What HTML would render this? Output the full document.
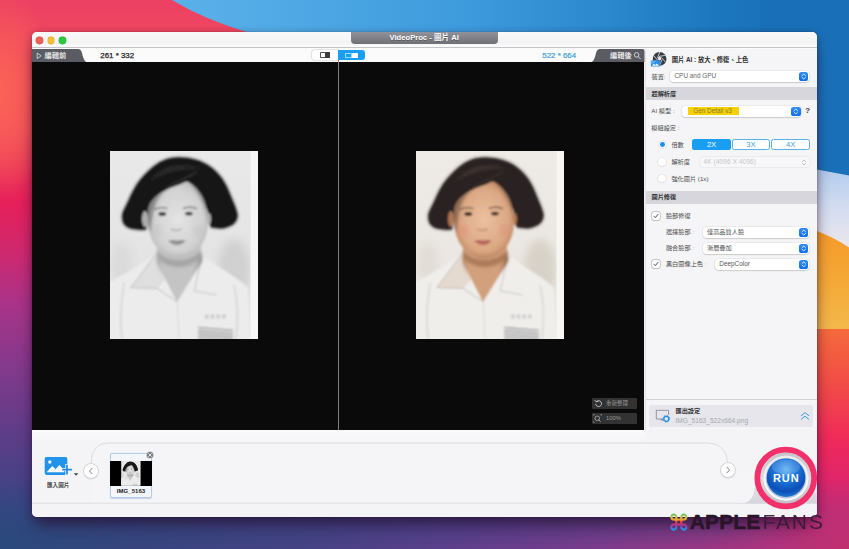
<!DOCTYPE html>
<html lang="zh-Hant">
<head>
<meta charset="utf-8">
<title>VideoProc - 圖片 AI</title>
<style>
html,body{margin:0;padding:0;}
body{width:849px;height:549px;overflow:hidden;position:relative;background:#3a3f80;font-family:"Liberation Sans","Noto Sans CJK TC",sans-serif;}
.a{position:absolute;}
.t{position:absolute;white-space:nowrap;line-height:1;}
#bg{position:absolute;left:0;top:0;}
#win{left:32px;top:32px;width:784.5px;height:484.800px;border-radius:5px;background:#f1f1f3;box-shadow:0 11px 16px -3px rgba(35,10,40,.62),0 1px 7px rgba(30,0,30,.3),0 0 1px rgba(0,0,0,.4);overflow:hidden;}
/* coordinates inside #win are relative to (32,32) */
#tbar{left:0;top:0;width:785px;height:14.600px;background:linear-gradient(#f9f9f9,#f3f3f4 70%,#fdfdfd);border-bottom:1px solid #c3c3c8;}
.tl{width:6.800px;height:6.800px;border-radius:50%;top:4.900px;}
#pill{left:319px;top:0;width:147px;height:12px;border-radius:0 0 4px 4px;background:linear-gradient(#92929a,#6f6f78);}
#tabrow{left:0;top:15.600px;width:785px;height:14.400px;background:#fbfbfb;}
#black{left:0;top:30px;width:612px;height:367.500px;background:#0a0a0a;}
#divider{left:305.500px;top:28px;width:1.600px;height:369.500px;background:#808080;}
#panel{left:613px;top:16.500px;width:172px;height:381px;background:#f5f5f7;border-left:1px solid #e4e4e8;}
.band{left:613.500px;width:171.500px;height:12.800px;background:#d6d6dc;}
.lbl{font-size:6.200px;color:#4a4a4a;}
.lblb{font-size:6.200px;color:#333;font-weight:bold;}
.sel{background:#fff;border-radius:3px;box-shadow:0 0.500px 1.200px rgba(0,0,0,.28),0 0 0 .3px rgba(0,0,0,.08);}
.sel .v{position:absolute;left:4.500px;top:50%;transform:translateY(-50%);font-size:6.400px;color:#666;white-space:nowrap;line-height:1;}
.stp{position:absolute;right:.8px;top:1px;bottom:1px;width:9.500px;border-radius:2.600px;background:linear-gradient(#2f8cf6,#0f6cf0);}
.stp svg{position:absolute;left:0;top:0;width:100%;height:100%;}
.radio{width:7.600px;height:7.600px;border-radius:50%;background:#fff;box-shadow:0 0 0 .6px #dadade,0 .5px .8px rgba(0,0,0,.1);}
.chk{width:8px;height:8px;border-radius:2px;background:#fff;box-shadow:0 0 0 .7px #b9b9bd,0 .5px 1px rgba(0,0,0,.12);}
.xbtn{height:11px;border-radius:2.500px;font-size:7.600px;text-align:center;line-height:11px;box-sizing:border-box;}
.ph{position:absolute;display:block;}
.pht{position:absolute;display:block;}
.cbtn{width:14px;height:14px;border-radius:50%;background:#fff;box-shadow:0 0 0 .8px #d0d0d4,0 1px 2px rgba(0,0,0,.18);}
.dk{background:#323232;border-radius:1px;height:10.800px;width:45.500px;left:559.500px;}
</style>
</head>
<body>
<svg id="bg" width="849" height="549" viewBox="0 0 849 549">
<defs>
<linearGradient id="gl" x1="0" y1="0" x2="0" y2="1">
<stop offset="0" stop-color="#ed4063"/><stop offset=".11" stop-color="#f04c5e"/><stop offset=".24" stop-color="#f04a58"/>
<stop offset=".37" stop-color="#e6205a"/><stop offset=".47" stop-color="#cc2a72"/><stop offset=".55" stop-color="#aa3388"/>
<stop offset=".66" stop-color="#86398c"/><stop offset=".79" stop-color="#5e3d88"/><stop offset=".91" stop-color="#3f4485"/><stop offset="1" stop-color="#2b4a82"/>
</linearGradient>
<radialGradient id="glow" cx=".5" cy=".5" r=".5"><stop offset="0" stop-color="#fc6456"/><stop offset=".5" stop-color="#f85c58" stop-opacity=".7"/><stop offset="1" stop-color="#f55a58" stop-opacity="0"/></radialGradient>
<linearGradient id="gr" x1="0" y1="329" x2="0" y2="549" gradientUnits="userSpaceOnUse">
<stop offset="0" stop-color="#f56a3c"/><stop offset=".25" stop-color="#f24c46"/><stop offset=".5" stop-color="#f02a5a"/>
<stop offset=".68" stop-color="#e0266a"/><stop offset=".82" stop-color="#c42c78"/><stop offset="1" stop-color="#b23482"/>
</linearGradient>
<linearGradient id="gor" x1="0" y1="231" x2="0" y2="329" gradientUnits="userSpaceOnUse"><stop offset="0" stop-color="#f59a2a"/><stop offset=".5" stop-color="#f4a836"/><stop offset="1" stop-color="#f3b84c"/></linearGradient>
<linearGradient id="glt" x1="0" y1="168" x2="0" y2="245" gradientUnits="userSpaceOnUse"><stop offset="0" stop-color="#b2cbee"/><stop offset=".5" stop-color="#d2dcf0"/><stop offset="1" stop-color="#eae6ee"/></linearGradient>
<linearGradient id="gt" x1="0" y1="0" x2="1" y2="0">
<stop offset="0" stop-color="#5cb2ea"/><stop offset=".2" stop-color="#4fa8e4"/><stop offset=".45" stop-color="#3d9adc"/><stop offset=".65" stop-color="#2b88cc"/><stop offset=".8" stop-color="#1d78c0"/><stop offset="1" stop-color="#1668b0"/>
</linearGradient>
<linearGradient id="gb" x1="0" y1="0" x2="1" y2="0">
<stop offset="0" stop-color="#2a4a7c"/><stop offset=".18" stop-color="#38447e"/><stop offset=".36" stop-color="#464284"/>
<stop offset=".53" stop-color="#5e3e8c"/><stop offset=".71" stop-color="#7e3a8c"/><stop offset=".88" stop-color="#a83480"/><stop offset="1" stop-color="#c2306e"/>
</linearGradient>
<linearGradient id="gbf" x1="0" y1="0" x2="0" y2="1"><stop offset="0" stop-color="#fff" stop-opacity="0"/><stop offset="1" stop-color="#fff"/></linearGradient>
<linearGradient id="grf" x1="725" y1="0" x2="805" y2="0" gradientUnits="userSpaceOnUse"><stop offset="0" stop-color="#fff" stop-opacity="0"/><stop offset="1" stop-color="#fff"/></linearGradient>
<mask id="mr"><rect x="700" y="300" width="149" height="249" fill="url(#grf)"/></mask>
<mask id="mb"><rect x="0" y="480" width="849" height="69" fill="url(#gbf)"/></mask>
</defs>
<rect width="849" height="549" fill="url(#gl)"/>
<ellipse cx="0" cy="92" rx="55" ry="105" fill="url(#glow)"/>
<path d="M160 -5 L172 0 Q205 20 250 33 L330 60 L849 60 L849 -5 Z" fill="url(#gt)"/>
<rect x="700" y="320" width="149" height="229" fill="url(#gr)" mask="url(#mr)"/>
<path d="M760 0 L849 0 L849 176 L817 170 L760 162Z" fill="#1a70b8"/>
<path d="M760 162 L817 169.500 L849 175.500 L849 250 L760 250Z" fill="url(#glt)"/>
<path d="M760 224 L817 231 Q835 238 849 247.500 L849 329 L760 329Z" fill="url(#gor)"/>
<rect x="0" y="480" width="849" height="69" fill="url(#gb)" mask="url(#mb)"/>
</svg>

<div id="win" class="a">
  <div id="tbar" class="a"></div>
  <div class="a tl" style="left:4.300px;background:#ee5f57;box-shadow:0 0 0 .4px #d04a42;"></div>
  <div class="a tl" style="left:15.600px;background:#f5bd30;box-shadow:0 0 0 .4px #d8a020;"></div>
  <div class="a tl" style="left:27px;background:#2bc840;box-shadow:0 0 0 .4px #1ea830;"></div>
  <div id="pill" class="a"></div>
  <div class="t" style="left:357.500px;top:1.900px;font-size:7.600px;font-weight:bold;color:#fff;text-shadow:0 .5px .5px rgba(0,0,0,.3);letter-spacing:.02px;">VideoProc - 圖片 AI</div>

  <div id="tabrow" class="a"></div>
  <!-- left tab -->
  <svg class="a" style="left:0;top:16.500px;" width="56" height="13.500" viewBox="0 0 56 13.500"><path d="M0 0 L46 0 Q49 0 50 4 Q51.500 12 55 13.500 L0 13.500Z" fill="#5b5b63"/><path d="M5.200 4 L9.200 6.800 L5.200 9.600Z" fill="none" stroke="#e4e4e4" stroke-width=".8" stroke-linejoin="round"/></svg>
  <div class="t" style="left:12.500px;top:19.800px;font-size:7.200px;font-weight:bold;color:#e6e6e6;">編輯前</div>
  <div class="t" style="left:68.300px;top:19.600px;font-size:7.900px;color:#222;-webkit-text-stroke:.25px #222;">261 * 332</div>
  <!-- toggle -->
  <div class="a" style="left:279.500px;top:18.300px;width:26.500px;height:10px;background:#fff;border-radius:2.500px 0 0 2.500px;box-shadow:0 0 0 .6px #cfcfcf;"></div>
  <div class="a" style="left:288.200px;top:20.400px;width:9.800px;height:5.800px;background:#fff;box-sizing:border-box;border:.7px solid #555;border-radius:.8px;"></div>
  <div class="a" style="left:293.100px;top:20.400px;width:4.900px;height:5.800px;background:#3c3c40;border-radius:0 .8px .8px 0;"></div>
  <div class="a" style="left:306px;top:18.300px;width:27.400px;height:10px;background:#1a9ef2;border-radius:0 3px 3px 0;"></div>
  <div class="a" style="left:313.200px;top:21.200px;width:6.500px;height:4.600px;box-sizing:border-box;border:.8px solid #9be0e8;border-radius:.6px;"></div>
  <div class="a" style="left:320.300px;top:21.200px;width:5.500px;height:4.600px;background:#fff;border-radius:.6px;"></div>
  <div class="t" style="left:510.300px;top:19.600px;font-size:7.900px;color:#39a0d2;-webkit-text-stroke:.2px #39a0d2;">522 * 664</div>
  <!-- right tab -->
  <svg class="a" style="left:558px;top:16.500px;" width="54.500" height="13.500" viewBox="0 0 54.500 13.500"><path d="M54.500 13.500 L54.500 2 Q54.500 0 52.500 0 L10 0 Q7 0 6 4 Q4.500 12 1 13.500Z" fill="#5b5b63"/><circle cx="46.600" cy="5.900" r="2.300" fill="none" stroke="#e4e4e4" stroke-width=".8"/><path d="M48.300 7.700 L50.300 9.800" stroke="#e4e4e4" stroke-width=".9" stroke-linecap="round"/></svg>
  <div class="t" style="left:578px;top:19.800px;font-size:7.200px;font-weight:bold;color:#e6e6e6;">編輯後</div>

  <div id="black" class="a"></div>
  <div class="a" style="left:78.300px;top:119.400px;width:148.300px;height:188.200px;"><svg class="ph" viewBox="0 0 148 188" width="148" height="188">
<defs>
<filter id="bl" x="-10%" y="-10%" width="120%" height="120%"><feGaussianBlur stdDeviation="0.8"/></filter>
<filter id="bml" x="-20%" y="-20%" width="140%" height="140%"><feGaussianBlur stdDeviation="1.5"/></filter>
<filter id="bbl" x="-30%" y="-30%" width="160%" height="160%"><feGaussianBlur stdDeviation="5"/></filter>
<clipPath id="cl"><rect x="0" y="0" width="148" height="188"/></clipPath>
<clipPath id="cfl"><path d="M38 60 C38.5 52 44 46 50.9 41.8 C57 38 63 35.5 69.7 33.4 C73 32 75 31 77.3 30.5 C82 33 86 36 88.6 40 C92 44 94 48 95.2 53 C97 58 97.8 62 98 66 C98.3 73 97.6 79 96.2 83.7 C94.5 89 92.5 93 89.8 96.5 C86.5 100 83 102.5 79.8 104 C75 106.3 71 107 66.5 107 C62 107 59 105.5 56 103 C52 100.5 49.5 99 47 96.5 C43.5 92.5 41.5 88 40.1 83.7 C38.5 78 37.6 68 38 60Z"/></clipPath>
<radialGradient id="fgl" cx="0.5" cy="0.5" r="0.62"><stop offset="0" stop-color="#e4e4e4"/><stop offset="0.65" stop-color="#d2d2d2"/><stop offset="1" stop-color="#aeaeae"/></radialGradient>
<linearGradient id="sgl" x1="0" y1="0" x2="0" y2="1"><stop offset="0" stop-color="#e9e9e9"/><stop offset="1" stop-color="#e0e0e0"/></linearGradient>
</defs>
<g clip-path="url(#cl)">
<rect width="148" height="188" fill="url(#sgl)"/>
<ellipse cx="124" cy="118" rx="16" ry="30" fill="#d0d0d0" filter="url(#bbl)"/>
<ellipse cx="12" cy="112" rx="10" ry="20" fill="#d0d0d0" opacity=".5" filter="url(#bbl)"/>
<g filter="url(#bl)">
<path d="M-2 133 C10 124 30 116 46 102 L67 150 L92 104 C110 118 128 126 138 137 L141 190 L-2 190 Z" fill="#ececec"/>
<path d="M47 96 L91 96 L92.500 110 L67 151 L46 110 Z" fill="#c4c4c4"/>
<path d="M47 100 L52 126 L47 112Z M91 100 L84 122 L92 110Z" fill="#8a8a8a" opacity=".7" filter="url(#bml)"/>
<path d="M48 100 C56 112 80 112 90 100 L91 106 C80 119 58 119 48 107Z" fill="#8a8a8a" opacity=".55" filter="url(#bml)"/>
<path d="M46 103 L21 136.500 L47 137.400 L67 150.500" fill="none" stroke="#555" stroke-width="1" opacity=".32"/>
<path d="M92 105 L84.200 140 L107 144" fill="none" stroke="#555" stroke-width="1" opacity=".28"/>
<path d="M46 103 L21 136.500 L47 137.400 L56 128Z" fill="#c8c8c8" opacity=".35"/>
<path d="M67.500 151 L69 188" fill="none" stroke="#555" stroke-width="1" opacity=".15"/>
<path d="M14 132 C11 150 10 170 12 188" fill="none" stroke="#555" stroke-width="2" opacity=".12"/>
<path d="M124 134 C128 150 128 170 126 188" fill="none" stroke="#555" stroke-width="2" opacity=".12"/>
<g fill="none" stroke="#9a9a9a" stroke-width="1.700" opacity=".95"><path d="M88 176.500 L123 179.500"/><path d="M88 179.800 L123 182.800"/><path d="M88 183.100 L123 186.100"/><path d="M88 186.400 L123 189"/></g>
<path d="M95 165.500 h22" stroke="#9a9a9a" stroke-width="4" stroke-dasharray="3.5 2.2" opacity=".4" fill="none"/>
<path d="M69.7 6.4 C58 6 48 11 41.5 17.3 C34 24 30 29 26.4 34.3 C22 41 20 47 17 53 C14 59 12 62 12.3 66.3 C12.5 70 13 72 15 73.9 C18 77 21 77.5 24.5 78 C28 78.8 32 78.8 36 78.6 L38.6 58 L97.6 58 L100.5 75.8 C106 77.5 111 77.5 115 76.7 C119 75.5 122.5 74.5 124.4 72 C127 69 128 66 127.2 62.6 C126 57 124 53 122.5 49.4 C120 43 118 38 115 32.4 C111 25 106 20 99.9 15.4 C91 9 80 6.5 69.7 6.4Z" fill="#181818" filter="url(#bml)" opacity=".8"/>
<path d="M69.7 6.4 C58 6 48 11 41.5 17.3 C34 24 30 29 26.4 34.3 C22 41 20 47 17 53 C14 59 12 62 12.3 66.3 C12.5 70 13 72 15 73.9 C18 77 21 77.5 24.5 78 C28 78.8 32 78.8 36 78.6 L38.6 58 L97.6 58 L100.5 75.8 C106 77.5 111 77.5 115 76.7 C119 75.5 122.5 74.5 124.4 72 C127 69 128 66 127.2 62.6 C126 57 124 53 122.5 49.4 C120 43 118 38 115 32.4 C111 25 106 20 99.9 15.4 C91 9 80 6.5 69.7 6.4Z" fill="#181818"/>
<path d="M40 30 C50 16 70 10 92 18 C76 16 56 20 40 30Z" fill="#555555" opacity=".35" filter="url(#bml)"/>
<ellipse cx="35" cy="68" rx="3" ry="8" fill="#aeaeae"/>
<ellipse cx="99" cy="68" rx="2" ry="6" fill="#aeaeae"/>
<path d="M38 60 C38.5 52 44 46 50.9 41.8 C57 38 63 35.5 69.7 33.4 C73 32 75 31 77.3 30.5 C82 33 86 36 88.6 40 C92 44 94 48 95.2 53 C97 58 97.8 62 98 66 C98.3 73 97.6 79 96.2 83.7 C94.5 89 92.5 93 89.8 96.5 C86.5 100 83 102.5 79.8 104 C75 106.3 71 107 66.5 107 C62 107 59 105.5 56 103 C52 100.5 49.5 99 47 96.5 C43.5 92.5 41.5 88 40.1 83.7 C38.5 78 37.6 68 38 60Z" fill="url(#fgl)"/>
<g clip-path="url(#cfl)">
<path d="M36 40 L60 34 C50 42 45 52 43 62 C42 68 41 74 40 80 L34 80Z" fill="#181818" opacity=".38" filter="url(#bml)"/>
<path d="M77 28 L100 40 L100 76 C98 60 92 44 77 28Z" fill="#181818" opacity=".4" filter="url(#bml)"/>
<path d="M40 95 C50 108 86 108 96 92 L96 112 L40 112Z" fill="#aeaeae" opacity=".35" filter="url(#bml)"/>
<ellipse cx="47" cy="80" rx="5" ry="6" fill="#c0c0c0" opacity=".35" filter="url(#bml)"/>
<ellipse cx="88" cy="80" rx="5" ry="6" fill="#c0c0c0" opacity=".35" filter="url(#bml)"/>
</g>
<path d="M44 58.500 q6.500 -3 13.500 -.8" stroke="#333" stroke-width="1.700" fill="none" opacity=".5"/>
<path d="M73 57.600 q7 -3 14 0.200" stroke="#333" stroke-width="1.700" fill="none" opacity=".5"/>
<ellipse cx="52.300" cy="63" rx="3.900" ry="1.900" fill="#222" opacity=".92"/>
<ellipse cx="78.900" cy="62.600" rx="3.900" ry="1.900" fill="#222" opacity=".92"/>
<path d="M61 78 q5.200 2.800 10.400 0" stroke="#777" stroke-width="1.500" fill="none" opacity=".5"/>
<path d="M58.500 90 q4.500 -1.800 8.500 -.4 q4.500 -1.400 8.500 .4 q-4 4.200 -8.500 4.200 q-4.500 0 -8.500 -4.200Z" fill="#8e8e8e" opacity=".85"/>
<path d="M58.500 90.300 q8.500 1.800 17 0" stroke="#555" stroke-width=".8" fill="none" opacity=".5"/>
<path d="M87 21 C78 26 66 31 56 37" stroke="#777" stroke-width="1.100" fill="none" opacity=".35"/>
</g>
<rect x="140.500" y="0" width="8" height="188" fill="#f6f6f6"/>
</g>
</svg></div>
  <div class="a" style="left:383.800px;top:119.400px;width:148.300px;height:188.200px;"><svg class="ph" viewBox="0 0 148 188" width="148" height="188">
<defs>
<filter id="br" x="-10%" y="-10%" width="120%" height="120%"><feGaussianBlur stdDeviation="0.8"/></filter>
<filter id="bmr" x="-20%" y="-20%" width="140%" height="140%"><feGaussianBlur stdDeviation="1.5"/></filter>
<filter id="bbr" x="-30%" y="-30%" width="160%" height="160%"><feGaussianBlur stdDeviation="5"/></filter>
<clipPath id="cr"><rect x="0" y="0" width="148" height="188"/></clipPath>
<clipPath id="cfr"><path d="M38 60 C38.5 52 44 46 50.9 41.8 C57 38 63 35.5 69.7 33.4 C73 32 75 31 77.3 30.5 C82 33 86 36 88.6 40 C92 44 94 48 95.2 53 C97 58 97.8 62 98 66 C98.3 73 97.6 79 96.2 83.7 C94.5 89 92.5 93 89.8 96.5 C86.5 100 83 102.5 79.8 104 C75 106.3 71 107 66.5 107 C62 107 59 105.5 56 103 C52 100.5 49.5 99 47 96.5 C43.5 92.5 41.5 88 40.1 83.7 C38.5 78 37.6 68 38 60Z"/></clipPath>
<radialGradient id="fgr" cx="0.5" cy="0.5" r="0.62"><stop offset="0" stop-color="#ecc0a0"/><stop offset="0.65" stop-color="#dca884"/><stop offset="1" stop-color="#ae7652"/></radialGradient>
<linearGradient id="sgr" x1="0" y1="0" x2="0" y2="1"><stop offset="0" stop-color="#eeebe7"/><stop offset="1" stop-color="#e8e4de"/></linearGradient>
</defs>
<g clip-path="url(#cr)">
<rect width="148" height="188" fill="url(#sgr)"/>
<ellipse cx="124" cy="118" rx="16" ry="30" fill="#d8d1c7" filter="url(#bbr)"/>
<ellipse cx="12" cy="112" rx="10" ry="20" fill="#d8d1c7" opacity=".5" filter="url(#bbr)"/>
<g filter="url(#br)">
<path d="M-2 133 C10 124 30 116 46 102 L67 150 L92 104 C110 118 128 126 138 137 L141 190 L-2 190 Z" fill="#f0eeeb"/>
<path d="M47 96 L91 96 L92.500 110 L67 151 L46 110 Z" fill="#d2a07c"/>
<path d="M47 100 L52 126 L47 112Z M91 100 L84 122 L92 110Z" fill="#87573a" opacity=".7" filter="url(#bmr)"/>
<path d="M48 100 C56 112 80 112 90 100 L91 106 C80 119 58 119 48 107Z" fill="#87573a" opacity=".55" filter="url(#bmr)"/>
<path d="M46 103 L21 136.500 L47 137.400 L67 150.500" fill="none" stroke="#5a5048" stroke-width="1" opacity=".32"/>
<path d="M92 105 L84.200 140 L107 144" fill="none" stroke="#5a5048" stroke-width="1" opacity=".28"/>
<path d="M46 103 L21 136.500 L47 137.400 L56 128Z" fill="#d0b49c" opacity=".35"/>
<path d="M67.500 151 L69 188" fill="none" stroke="#5a5048" stroke-width="1" opacity=".15"/>
<path d="M14 132 C11 150 10 170 12 188" fill="none" stroke="#5a5048" stroke-width="2" opacity=".12"/>
<path d="M124 134 C128 150 128 170 126 188" fill="none" stroke="#5a5048" stroke-width="2" opacity=".12"/>
<g fill="none" stroke="#9a9aa0" stroke-width="1.700" opacity=".95"><path d="M88 176.500 L123 179.500"/><path d="M88 179.800 L123 182.800"/><path d="M88 183.100 L123 186.100"/><path d="M88 186.400 L123 189"/></g>
<path d="M95 165.500 h22" stroke="#9a9aa0" stroke-width="4" stroke-dasharray="3.5 2.2" opacity=".4" fill="none"/>
<path d="M69.7 6.4 C58 6 48 11 41.5 17.3 C34 24 30 29 26.4 34.3 C22 41 20 47 17 53 C14 59 12 62 12.3 66.3 C12.5 70 13 72 15 73.9 C18 77 21 77.5 24.5 78 C28 78.8 32 78.8 36 78.6 L38.6 58 L97.6 58 L100.5 75.8 C106 77.5 111 77.5 115 76.7 C119 75.5 122.5 74.5 124.4 72 C127 69 128 66 127.2 62.6 C126 57 124 53 122.5 49.4 C120 43 118 38 115 32.4 C111 25 106 20 99.9 15.4 C91 9 80 6.5 69.7 6.4Z" fill="#2a2220" filter="url(#bmr)" opacity=".8"/>
<path d="M69.7 6.4 C58 6 48 11 41.5 17.3 C34 24 30 29 26.4 34.3 C22 41 20 47 17 53 C14 59 12 62 12.3 66.3 C12.5 70 13 72 15 73.9 C18 77 21 77.5 24.5 78 C28 78.8 32 78.8 36 78.6 L38.6 58 L97.6 58 L100.5 75.8 C106 77.5 111 77.5 115 76.7 C119 75.5 122.5 74.5 124.4 72 C127 69 128 66 127.2 62.6 C126 57 124 53 122.5 49.4 C120 43 118 38 115 32.4 C111 25 106 20 99.9 15.4 C91 9 80 6.5 69.7 6.4Z" fill="#2a2220"/>
<path d="M40 30 C50 16 70 10 92 18 C76 16 56 20 40 30Z" fill="#6a5850" opacity=".35" filter="url(#bmr)"/>
<ellipse cx="35" cy="68" rx="3" ry="8" fill="#ae7652"/>
<ellipse cx="99" cy="68" rx="2" ry="6" fill="#ae7652"/>
<path d="M38 60 C38.5 52 44 46 50.9 41.8 C57 38 63 35.5 69.7 33.4 C73 32 75 31 77.3 30.5 C82 33 86 36 88.6 40 C92 44 94 48 95.2 53 C97 58 97.8 62 98 66 C98.3 73 97.6 79 96.2 83.7 C94.5 89 92.5 93 89.8 96.5 C86.5 100 83 102.5 79.8 104 C75 106.3 71 107 66.5 107 C62 107 59 105.5 56 103 C52 100.5 49.5 99 47 96.5 C43.5 92.5 41.5 88 40.1 83.7 C38.5 78 37.6 68 38 60Z" fill="url(#fgr)"/>
<g clip-path="url(#cfr)">
<path d="M36 40 L60 34 C50 42 45 52 43 62 C42 68 41 74 40 80 L34 80Z" fill="#2a2220" opacity=".38" filter="url(#bmr)"/>
<path d="M77 28 L100 40 L100 76 C98 60 92 44 77 28Z" fill="#2a2220" opacity=".4" filter="url(#bmr)"/>
<path d="M40 95 C50 108 86 108 96 92 L96 112 L40 112Z" fill="#ae7652" opacity=".35" filter="url(#bmr)"/>
<ellipse cx="47" cy="80" rx="5" ry="6" fill="#e08a78" opacity=".35" filter="url(#bmr)"/>
<ellipse cx="88" cy="80" rx="5" ry="6" fill="#e08a78" opacity=".35" filter="url(#bmr)"/>
</g>
<path d="M44 58.500 q6.500 -3 13.500 -.8" stroke="#2a1c14" stroke-width="1.700" fill="none" opacity=".5"/>
<path d="M73 57.600 q7 -3 14 0.200" stroke="#2a1c14" stroke-width="1.700" fill="none" opacity=".5"/>
<ellipse cx="52.300" cy="63" rx="3.900" ry="1.900" fill="#1e1410" opacity=".92"/>
<ellipse cx="78.900" cy="62.600" rx="3.900" ry="1.900" fill="#1e1410" opacity=".92"/>
<path d="M61 78 q5.200 2.800 10.400 0" stroke="#9a6448" stroke-width="1.500" fill="none" opacity=".5"/>
<path d="M58.500 90 q4.500 -1.800 8.500 -.4 q4.500 -1.400 8.500 .4 q-4 4.200 -8.500 4.200 q-4.500 0 -8.500 -4.200Z" fill="#b8645a" opacity=".85"/>
<path d="M58.500 90.300 q8.500 1.800 17 0" stroke="#6a3028" stroke-width=".8" fill="none" opacity=".5"/>
<path d="M87 21 C78 26 66 31 56 37" stroke="#6a5a4a" stroke-width="1.100" fill="none" opacity=".35"/>
</g>
<rect x="140.500" y="0" width="8" height="188" fill="#f8f6f2"/>
</g>
</svg></div>
  <div id="divider" class="a"></div>
  <!-- dark buttons -->
  <div class="a dk" style="top:366.200px;"></div>
  <div class="a dk" style="top:380.900px;"></div>
  <svg class="a" style="left:561.500px;top:367.400px;" width="9" height="9" viewBox="0 0 9 9"><path d="M2.300 2.600 A3 3 0 1 1 1.600 5.300" fill="none" stroke="#d8d8d8" stroke-width=".8" stroke-linecap="round"/><path d="M.9 1.300 L2.300 2.900 L4.200 2.200" fill="none" stroke="#d8d8d8" stroke-width=".8" stroke-linecap="round" stroke-linejoin="round"/></svg>
  <svg class="a" style="left:561.300px;top:381.800px;" width="9" height="9" viewBox="0 0 9 9"><circle cx="4.300" cy="4.300" r="2.300" fill="none" stroke="#bdbdbd" stroke-width=".7"/><path d="M6 6 L7.300 7.400" stroke="#bdbdbd" stroke-width=".8" stroke-linecap="round"/><path d="M.5 2 V.5 H2 M7 .5 H8.500 V2 M.5 7 V8.500 H2" fill="none" stroke="#8a8a8a" stroke-width=".6"/></svg>
  <div class="t" style="left:574px;top:369px;font-size:5.500px;color:#9a9a9a;">重新整理</div>
  <div class="t" style="left:574px;top:383.600px;font-size:5.800px;color:#9a9a9a;">100%</div>

  <!-- right panel -->
  <div id="panel" class="a"></div>
  <svg class="a" style="left:618.300px;top:19px;" width="18" height="18" viewBox="0 0 18 18">
    <circle cx="9.600" cy="7.900" r="6.900" fill="#383b42"/>
    <g stroke="#f5f5f7" stroke-width=".75" fill="none"><path d="M9.800 1 L7.400 7.100"/><path d="M15.600 4.300 L9.200 5.400"/><path d="M15.700 11.400 L11.500 6.500"/><path d="M9.500 14.800 L11.900 8.700"/><path d="M3.600 11.500 L10 10.400"/><path d="M3.500 4.400 L7.700 9.300"/></g>
    <path d="M8.200 6.300 L10 5.600 L11.300 6.900 L10.900 8.900 L9.200 9.600 L7.800 8.300Z" fill="#e6e6ea"/>
    <rect x=".9" y="9.400" width="9.500" height="6.200" rx=".9" fill="#2a8fe4"/>
    <path d="M.9 10.300 Q.9 9.400 1.800 9.400 L8 9.400 L.9 13.500Z" fill="#62b4f4" opacity=".8"/>
    <path d="M1.900 14.700 L3.800 12.700 L5.200 13.900 L6.700 12.400 L9.200 14.700Z" fill="#fff"/>
  </svg>
  <div class="t lblb" style="left:639.700px;top:25px;font-size:6.300px;color:#2c2c2c;">圖片 AI : 放大、修復、上色</div>
  <div class="t lbl" style="left:619.500px;top:41.600px;">裝置:</div>
  <div class="a sel" style="left:638px;top:38.600px;width:139px;height:11px;"><span class="v">CPU and GPU</span><span class="stp"><svg viewBox="0 0 9.500 9"><path d="M3 3.700 L4.750 2 L6.500 3.700 M3 5.400 L4.750 7.100 L6.500 5.400" fill="none" stroke="#fff" stroke-width=".9" stroke-linecap="round" stroke-linejoin="round"/></svg></span></div>
  <div class="a band" style="top:55.200px;"></div>
  <div class="t lblb" style="left:619.500px;top:58.700px;">超解析度</div>

  <div class="t lbl" style="left:619.300px;top:76px;">AI 模型 :</div>
  <div class="a sel" style="left:650.400px;top:73.900px;width:119px;height:10.800px;"><span class="a" style="left:5.300px;top:1.600px;width:51.500px;height:7.200px;background:#f7d106;"></span><span class="v" style="left:10.800px;color:#8a7a34;">Gen Detail v3</span><span class="stp"><svg viewBox="0 0 9.500 9"><path d="M3 3.700 L4.750 2 L6.500 3.700 M3 5.400 L4.750 7.100 L6.500 5.400" fill="none" stroke="#fff" stroke-width=".9" stroke-linecap="round" stroke-linejoin="round"/></svg></span></div>
  <div class="t" style="left:773.300px;top:75px;font-size:7.800px;font-weight:bold;color:#3a3a3a;">?</div>
  <div class="t lbl" style="left:619.300px;top:92.600px;">模組設定 :</div>

  <div class="a radio" style="left:626.500px;top:108.800px;"></div>
  <div class="a" style="left:627.900px;top:110.200px;width:4.800px;height:4.800px;border-radius:50%;background:#1a90ea;"></div>
  <div class="t lbl" style="left:639.400px;top:109.500px;">倍數</div>
  <div class="a xbtn" style="left:660.400px;top:107.300px;width:38.300px;background:#1a9ef2;color:#fff;">2X</div>
  <div class="a xbtn" style="left:700.200px;top:107.300px;width:37.500px;background:#fff;color:#3a9fdc;border:.8px solid #58b0e4;line-height:9.400px;">3X</div>
  <div class="a xbtn" style="left:739.400px;top:107.300px;width:38.400px;background:#fff;color:#3a9fdc;border:.8px solid #58b0e4;line-height:9.400px;">4X</div>

  <div class="a radio" style="left:626px;top:126.300px;"></div>
  <div class="t lbl" style="left:639.400px;top:127px;">解析度</div>
  <div class="a" style="left:668px;top:125px;width:109.500px;height:10.400px;background:#f7f7f9;border-radius:3px;box-shadow:0 0 0 .5px #e2e2e6;"><span class="t" style="left:3.600px;top:2.200px;font-size:6.400px;color:#c6c6c9;letter-spacing:.15px;">4K (4096 X 4096)</span><svg class="a" style="right:2.500px;top:1.700px;" width="6" height="7" viewBox="0 0 6 7"><path d="M1.300 2.600 L3 1 L4.700 2.600 M1.300 4.400 L3 6 L4.700 4.400" fill="none" stroke="#b4b4b8" stroke-width=".8" stroke-linecap="round" stroke-linejoin="round"/></svg></div>
  <div class="a radio" style="left:626px;top:142.800px;"></div>
  <div class="t lbl" style="left:639.400px;top:143.500px;">強化圖片 (1x)</div>

  <div class="a band" style="top:158.800px;"></div>
  <div class="t lblb" style="left:619.500px;top:162.200px;">圖片修復</div>

  <div class="a chk" style="left:620.200px;top:179.800px;"></div>
  <svg class="a" style="left:620.200px;top:179.800px;" width="8" height="8" viewBox="0 0 8 8"><path d="M2 4.200 L3.400 5.700 L6 2.300" fill="none" stroke="#444" stroke-width=".9" stroke-linecap="round" stroke-linejoin="round"/></svg>
  <div class="t lbl" style="left:633.900px;top:180.600px;">臉部修復</div>

  <div class="t lbl" style="left:633.900px;top:197px;">選擇臉部 <span style="color:#aaa">:</span></div>
  <div class="a sel" style="left:670.500px;top:194.500px;width:106.500px;height:11px;"><span class="v" style="color:#4c4c4c;font-size:6.200px;">僅高品質人臉</span><span class="stp"><svg viewBox="0 0 9.500 9"><path d="M3 3.700 L4.750 2 L6.500 3.700 M3 5.400 L4.750 7.100 L6.500 5.400" fill="none" stroke="#fff" stroke-width=".9" stroke-linecap="round" stroke-linejoin="round"/></svg></span></div>
  <div class="t lbl" style="left:633.900px;top:213.200px;">融合臉部 <span style="color:#aaa">:</span></div>
  <div class="a sel" style="left:670.500px;top:210.800px;width:106.500px;height:10.800px;"><span class="v" style="color:#4c4c4c;font-size:6.200px;">漸層疊加</span><span class="stp"><svg viewBox="0 0 9.500 9"><path d="M3 3.700 L4.750 2 L6.500 3.700 M3 5.400 L4.750 7.100 L6.500 5.400" fill="none" stroke="#fff" stroke-width=".9" stroke-linecap="round" stroke-linejoin="round"/></svg></span></div>

  <div class="a chk" style="left:620.200px;top:228px;"></div>
  <svg class="a" style="left:620.200px;top:228px;" width="8" height="8" viewBox="0 0 8 8"><path d="M2 4.200 L3.400 5.700 L6 2.300" fill="none" stroke="#444" stroke-width=".9" stroke-linecap="round" stroke-linejoin="round"/></svg>
  <div class="t lbl" style="left:633.900px;top:229px;">黑白圖像上色 <span style="color:#aaa">:</span></div>
  <div class="a sel" style="left:682.800px;top:227px;width:94.200px;height:10.600px;"><span class="v" style="color:#555;">DeepColor</span><span class="stp"><svg viewBox="0 0 9.500 9"><path d="M3 3.700 L4.750 2 L6.500 3.700 M3 5.400 L4.750 7.100 L6.500 5.400" fill="none" stroke="#fff" stroke-width=".9" stroke-linecap="round" stroke-linejoin="round"/></svg></span></div>

  <!-- export -->
  <div class="a" style="left:613.500px;top:366.600px;width:171.500px;height:1px;background:#d2d2d6;"></div>
  <div class="a" style="left:617.200px;top:373px;width:164px;height:22px;background:#e6e6ec;border-radius:2px;"></div>
  <svg class="a" style="left:622.500px;top:377px;" width="18" height="14" viewBox="0 0 18 14"><path d="M8 10 H1.300 V1.300 H13.600 V6" fill="none" stroke="#8a8a90" stroke-width=".9"/><path d="M5 10 L7.300 12.300 L8 10" fill="#8a8a90"/><circle cx="11.300" cy="9.800" r="2.500" fill="none" stroke="#1f8fe8" stroke-width="1.300"/><circle cx="11.300" cy="9.800" r="3.300" fill="none" stroke="#1f8fe8" stroke-width="1" stroke-dasharray="1.200 1.400"/></svg>
  <div class="t lblb" style="left:643.500px;top:375.800px;">匯出設定</div>
  <div class="t" style="left:643.500px;top:386.200px;font-size:6.600px;color:#a6a6aa;">IMG_5163_522x664.png</div>
  <svg class="a" style="left:767.500px;top:378.500px;" width="10" height="10" viewBox="0 0 10 10"><path d="M1.300 4.600 L5 1.600 L8.700 4.600 M1.300 8.200 L5 5.200 L8.700 8.200" fill="none" stroke="#3a9fdc" stroke-width="1" stroke-linecap="round" stroke-linejoin="round"/></svg>

  <!-- bottom area -->
  <div class="a" style="left:0;top:397.500px;width:785px;height:88px;background:#f4f4f6;"></div>
  <div class="a" style="left:0;top:397.500px;width:613px;height:11px;background:linear-gradient(#fafafc,#f5f5f7);"></div>
  <svg class="a" style="left:0;top:397.500px;" width="785" height="87" viewBox="0 0 785 86.500">
    <defs><linearGradient id="ped" x1="0" y1="0" x2="0" y2="1"><stop offset="0" stop-color="#e2e2e6"/><stop offset="1" stop-color="#d4d4da"/></linearGradient></defs>
    <path d="M59 73 L59 33.500 Q59.500 12.800 76 12.800 L674 12.800 Q695 12.800 695.500 33.500 L722 42 L722 62 Q721 73 708 73Z" fill="#f5f5f8"/>
    <path d="M59 33.500 Q59.500 12.800 76 12.800 L674 12.800 Q695 12.800 695.500 33.500" fill="none" stroke="#d8d8dc" stroke-width=".9"/>
    <path d="M0 73 L710 73" stroke="#dcdce0" stroke-width=".9" fill="none"/>
    <path d="M706 73.400 Q719.500 73.400 721.500 63 L723 54 L785 62 L785 73.400Z" fill="url(#ped)"/>
  </svg>
  <!-- import icon -->
  <svg class="a" style="left:11px;top:423px;" width="38" height="24" viewBox="0 0 38 24">
    <rect x="1.700" y="1.900" width="22.600" height="18" rx="1.800" fill="#2293ea"/>
    <circle cx="6.800" cy="7" r="1.700" fill="#fff"/>
    <path d="M3.600 17.300 L9.300 11 L12.600 14.300 L16.400 10 L21 15 L21 17.300Z" fill="#fff"/>
    <path d="M24 9 V20.300 M18.400 14.600 H29.700" stroke="#f4f4f6" stroke-width="3.400"/>
    <path d="M24 9.800 V19.500 M19.200 14.600 H28.900" stroke="#1f8be4" stroke-width="1.700"/>
    <path d="M30.800 18.200 L35.400 18.200 L33.100 20.800Z" fill="#444"/>
  </svg>
  <div class="t" style="left:15px;top:450.800px;font-size:5.600px;font-weight:bold;color:#444;">匯入圖片</div>
  <div class="a cbtn" style="left:52px;top:432px;"></div>
  <svg class="a" style="left:52px;top:432px;" width="14" height="14" viewBox="0 0 14 14"><path d="M8 4.300 L5.400 7 L8 9.700" fill="none" stroke="#777" stroke-width=".9" stroke-linecap="round" stroke-linejoin="round"/></svg>
  <div class="a cbtn" style="left:688.800px;top:431.400px;"></div>
  <svg class="a" style="left:688.800px;top:431.400px;" width="14" height="14" viewBox="0 0 14 14"><path d="M6 4.300 L8.600 7 L6 9.700" fill="none" stroke="#777" stroke-width=".9" stroke-linecap="round" stroke-linejoin="round"/></svg>
  <!-- thumb -->
  <div class="a" style="left:78.300px;top:421.300px;width:42.200px;height:45.200px;box-sizing:border-box;border:.9px solid #b2cbe9;border-radius:2px;background:#f3f6fb;box-shadow:0 .5px 1px rgba(120,150,190,.35);"></div>
  <div class="a" style="left:78px;top:429px;width:42px;height:24.700px;background:#000;"></div>
  <div class="a" style="left:89.300px;top:429px;width:19.700px;height:24.700px;overflow:hidden;"><svg class="pht" viewBox="0 0 148 188" width="19.7" height="24.7">
<defs>
<filter id="bt" x="-10%" y="-10%" width="120%" height="120%"><feGaussianBlur stdDeviation="0.8"/></filter>
<filter id="bmt" x="-20%" y="-20%" width="140%" height="140%"><feGaussianBlur stdDeviation="1.5"/></filter>
<filter id="bbt" x="-30%" y="-30%" width="160%" height="160%"><feGaussianBlur stdDeviation="5"/></filter>
<clipPath id="ct"><rect x="0" y="0" width="148" height="188"/></clipPath>
<clipPath id="cft"><path d="M38 60 C38.5 52 44 46 50.9 41.8 C57 38 63 35.5 69.7 33.4 C73 32 75 31 77.3 30.5 C82 33 86 36 88.6 40 C92 44 94 48 95.2 53 C97 58 97.8 62 98 66 C98.3 73 97.6 79 96.2 83.7 C94.5 89 92.5 93 89.8 96.5 C86.5 100 83 102.5 79.8 104 C75 106.3 71 107 66.5 107 C62 107 59 105.5 56 103 C52 100.5 49.5 99 47 96.5 C43.5 92.5 41.5 88 40.1 83.7 C38.5 78 37.6 68 38 60Z"/></clipPath>
<radialGradient id="fgt" cx="0.5" cy="0.5" r="0.62"><stop offset="0" stop-color="#e4e4e4"/><stop offset="0.65" stop-color="#d2d2d2"/><stop offset="1" stop-color="#aeaeae"/></radialGradient>
<linearGradient id="sgt" x1="0" y1="0" x2="0" y2="1"><stop offset="0" stop-color="#e9e9e9"/><stop offset="1" stop-color="#e0e0e0"/></linearGradient>
</defs>
<g clip-path="url(#ct)">
<rect width="148" height="188" fill="url(#sgt)"/>
<ellipse cx="124" cy="118" rx="16" ry="30" fill="#d0d0d0" filter="url(#bbt)"/>
<ellipse cx="12" cy="112" rx="10" ry="20" fill="#d0d0d0" opacity=".5" filter="url(#bbt)"/>
<g filter="url(#bt)">
<path d="M-2 133 C10 124 30 116 46 102 L67 150 L92 104 C110 118 128 126 138 137 L141 190 L-2 190 Z" fill="#ececec"/>
<path d="M47 96 L91 96 L92.500 110 L67 151 L46 110 Z" fill="#c4c4c4"/>
<path d="M47 100 L52 126 L47 112Z M91 100 L84 122 L92 110Z" fill="#8a8a8a" opacity=".7" filter="url(#bmt)"/>
<path d="M48 100 C56 112 80 112 90 100 L91 106 C80 119 58 119 48 107Z" fill="#8a8a8a" opacity=".55" filter="url(#bmt)"/>
<path d="M46 103 L21 136.500 L47 137.400 L67 150.500" fill="none" stroke="#555" stroke-width="1" opacity=".32"/>
<path d="M92 105 L84.200 140 L107 144" fill="none" stroke="#555" stroke-width="1" opacity=".28"/>
<path d="M46 103 L21 136.500 L47 137.400 L56 128Z" fill="#c8c8c8" opacity=".35"/>
<path d="M67.500 151 L69 188" fill="none" stroke="#555" stroke-width="1" opacity=".15"/>
<path d="M14 132 C11 150 10 170 12 188" fill="none" stroke="#555" stroke-width="2" opacity=".12"/>
<path d="M124 134 C128 150 128 170 126 188" fill="none" stroke="#555" stroke-width="2" opacity=".12"/>
<g fill="none" stroke="#9a9a9a" stroke-width="1.700" opacity=".95"><path d="M88 176.500 L123 179.500"/><path d="M88 179.800 L123 182.800"/><path d="M88 183.100 L123 186.100"/><path d="M88 186.400 L123 189"/></g>
<path d="M95 165.500 h22" stroke="#9a9a9a" stroke-width="4" stroke-dasharray="3.5 2.2" opacity=".4" fill="none"/>
<path d="M69.7 6.4 C58 6 48 11 41.5 17.3 C34 24 30 29 26.4 34.3 C22 41 20 47 17 53 C14 59 12 62 12.3 66.3 C12.5 70 13 72 15 73.9 C18 77 21 77.5 24.5 78 C28 78.8 32 78.8 36 78.6 L38.6 58 L97.6 58 L100.5 75.8 C106 77.5 111 77.5 115 76.7 C119 75.5 122.5 74.5 124.4 72 C127 69 128 66 127.2 62.6 C126 57 124 53 122.5 49.4 C120 43 118 38 115 32.4 C111 25 106 20 99.9 15.4 C91 9 80 6.5 69.7 6.4Z" fill="#181818" filter="url(#bmt)" opacity=".8"/>
<path d="M69.7 6.4 C58 6 48 11 41.5 17.3 C34 24 30 29 26.4 34.3 C22 41 20 47 17 53 C14 59 12 62 12.3 66.3 C12.5 70 13 72 15 73.9 C18 77 21 77.5 24.5 78 C28 78.8 32 78.8 36 78.6 L38.6 58 L97.6 58 L100.5 75.8 C106 77.5 111 77.5 115 76.7 C119 75.5 122.5 74.5 124.4 72 C127 69 128 66 127.2 62.6 C126 57 124 53 122.5 49.4 C120 43 118 38 115 32.4 C111 25 106 20 99.9 15.4 C91 9 80 6.5 69.7 6.4Z" fill="#181818"/>
<path d="M40 30 C50 16 70 10 92 18 C76 16 56 20 40 30Z" fill="#555555" opacity=".35" filter="url(#bmt)"/>
<ellipse cx="35" cy="68" rx="3" ry="8" fill="#aeaeae"/>
<ellipse cx="99" cy="68" rx="2" ry="6" fill="#aeaeae"/>
<path d="M38 60 C38.5 52 44 46 50.9 41.8 C57 38 63 35.5 69.7 33.4 C73 32 75 31 77.3 30.5 C82 33 86 36 88.6 40 C92 44 94 48 95.2 53 C97 58 97.8 62 98 66 C98.3 73 97.6 79 96.2 83.7 C94.5 89 92.5 93 89.8 96.5 C86.5 100 83 102.5 79.8 104 C75 106.3 71 107 66.5 107 C62 107 59 105.5 56 103 C52 100.5 49.5 99 47 96.5 C43.5 92.5 41.5 88 40.1 83.7 C38.5 78 37.6 68 38 60Z" fill="url(#fgt)"/>
<g clip-path="url(#cft)">
<path d="M36 40 L60 34 C50 42 45 52 43 62 C42 68 41 74 40 80 L34 80Z" fill="#181818" opacity=".38" filter="url(#bmt)"/>
<path d="M77 28 L100 40 L100 76 C98 60 92 44 77 28Z" fill="#181818" opacity=".4" filter="url(#bmt)"/>
<path d="M40 95 C50 108 86 108 96 92 L96 112 L40 112Z" fill="#aeaeae" opacity=".35" filter="url(#bmt)"/>
<ellipse cx="47" cy="80" rx="5" ry="6" fill="#c0c0c0" opacity=".35" filter="url(#bmt)"/>
<ellipse cx="88" cy="80" rx="5" ry="6" fill="#c0c0c0" opacity=".35" filter="url(#bmt)"/>
</g>
<path d="M44 58.500 q6.500 -3 13.500 -.8" stroke="#333" stroke-width="1.700" fill="none" opacity=".5"/>
<path d="M73 57.600 q7 -3 14 0.200" stroke="#333" stroke-width="1.700" fill="none" opacity=".5"/>
<ellipse cx="52.300" cy="63" rx="3.900" ry="1.900" fill="#222" opacity=".92"/>
<ellipse cx="78.900" cy="62.600" rx="3.900" ry="1.900" fill="#222" opacity=".92"/>
<path d="M61 78 q5.200 2.800 10.400 0" stroke="#777" stroke-width="1.500" fill="none" opacity=".5"/>
<path d="M58.500 90 q4.500 -1.800 8.500 -.4 q4.500 -1.400 8.500 .4 q-4 4.200 -8.500 4.200 q-4.500 0 -8.500 -4.200Z" fill="#8e8e8e" opacity=".85"/>
<path d="M58.500 90.300 q8.500 1.800 17 0" stroke="#555" stroke-width=".8" fill="none" opacity=".5"/>
<path d="M87 21 C78 26 66 31 56 37" stroke="#777" stroke-width="1.100" fill="none" opacity=".35"/>
</g>
<rect x="140.500" y="0" width="8" height="188" fill="#f6f6f6"/>
</g>
</svg></div>
  <div class="t" style="left:84.800px;top:456.200px;font-size:6px;font-weight:bold;color:#222;letter-spacing:.05px;">IMG_5163</div>
  <svg class="a" style="left:114.400px;top:419.200px;" width="8" height="8" viewBox="0 0 8 8"><circle cx="4" cy="4" r="3.600" fill="#7c7c80" stroke="#f4f4f6" stroke-width=".5"/><path d="M2.600 2.600 L5.400 5.400 M5.400 2.600 L2.600 5.400" stroke="#fff" stroke-width=".8" stroke-linecap="round"/></svg>
</div>

<!-- RUN button (over the window, ring overlaps edge) -->
<svg class="a" style="left:745px;top:438px;" width="82" height="82" viewBox="0 0 82 82">
  <defs>
    <radialGradient id="ball" cx=".5" cy=".3" r=".75"><stop offset="0" stop-color="#58aef0"/><stop offset=".35" stop-color="#1f78dc"/><stop offset=".75" stop-color="#0b4fb8"/><stop offset="1" stop-color="#2a84dc"/></radialGradient>
    <linearGradient id="ring" x1="0" y1="0" x2="0" y2="1"><stop offset="0" stop-color="#c4c4c8"/><stop offset=".5" stop-color="#dcdce0"/><stop offset="1" stop-color="#c0c0c6"/></linearGradient>
    <linearGradient id="ring2" x1="0" y1="0" x2="0" y2="1"><stop offset="0" stop-color="#ececf0"/><stop offset="1" stop-color="#fafafc"/></linearGradient>
    <clipPath id="wclip"><rect x="-10" y="-10" width="81.500" height="88"/></clipPath>
  </defs>
  <g clip-path="url(#wclip)">
  <circle cx="41" cy="40.200" r="25.600" fill="url(#ring)"/>
  <circle cx="41" cy="40.200" r="22.600" fill="url(#ring2)"/>
  <circle cx="41" cy="40.200" r="20.300" fill="#b9c6dc"/>
  <circle cx="41" cy="39.700" r="19.300" fill="url(#ball)"/>
  <ellipse cx="41" cy="29" rx="14" ry="7.500" fill="#fff" opacity=".16"/>
  </g>
  <circle cx="40.800" cy="40" r="28.400" fill="none" stroke="#f2306c" stroke-width="5.900"/>
  <text x="41.300" y="43.900" text-anchor="middle" font-family="Liberation Sans, sans-serif" font-weight="bold" font-size="11" letter-spacing="1" fill="#fff">RUN</text>
</svg>

<!-- watermark -->
<svg class="a" style="left:669px;top:512px;" width="20" height="20" viewBox="0 0 20 20">
  <defs><linearGradient id="wm" x1="0" y1="2" x2="0" y2="18.500" gradientUnits="userSpaceOnUse"><stop offset="0" stop-color="#66c074"/><stop offset=".2" stop-color="#c8c83c"/><stop offset=".36" stop-color="#f29a2c"/><stop offset=".52" stop-color="#e43446"/><stop offset=".7" stop-color="#9a3c9c"/><stop offset=".86" stop-color="#3c7cd8"/><stop offset="1" stop-color="#1ea0ea"/></linearGradient></defs>
  <path d="M7.300 7.600 H12.300 V12.600 H7.300Z M7.300 7.600 V5.200 A2.500 2.500 0 1 0 4.800 7.600 H7.300 M12.300 7.600 V5.200 A2.500 2.500 0 1 1 14.800 7.600 H12.300 M7.300 12.600 V15 A2.500 2.500 0 1 1 4.800 12.600 H7.300 M12.300 12.600 V15 A2.500 2.500 0 1 0 14.800 12.600 H12.300" fill="none" stroke="url(#wm)" stroke-width="2.200" stroke-linejoin="round"/>
</svg>
<div class="t" style="left:689.800px;top:510.900px;font-size:21px;font-weight:bold;color:#2a1428;letter-spacing:.1px;-webkit-text-stroke:.5px #2a1428;">APPLE</div>
<div class="t" style="left:762.400px;top:510.900px;font-size:21px;color:#3a1a3a;letter-spacing:1.900px;opacity:.95;">FANS</div>
</body>
</html>
